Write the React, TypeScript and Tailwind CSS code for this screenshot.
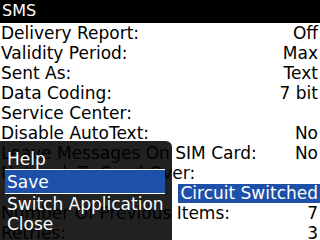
import React from "react";

type Row = { label: string; value?: string; focused?: boolean };

const rows: Row[] = [
  { label: "Delivery Report:", value: "Off" },
  { label: "Validity Period:", value: "Max" },
  { label: "Sent As:", value: "Text" },
  { label: "Data Coding:", value: "7 bit" },
  { label: "Service Center:" },
  { label: "Disable AutoText:", value: "No" },
  { label: "Leave Messages On SIM Card:", value: "No" },
  { label: "Network To Send Over:" },
  { label: "", value: "Circuit Switched", focused: true },
  { label: "Number Of Previous Items:", value: "7" },
  { label: "Retries:", value: "3" },
];

const menuItems = ["Help", "Save", "Switch Application", "Close"];

export default function App() {
  return (
    <div
      className="relative w-[320px] h-[240px] overflow-hidden bg-white text-black"
      style={{ fontFamily: '"DejaVu Sans", sans-serif' }}
    >
      {/* title bar */}
      <div className="h-[23px] bg-black pl-[2px] text-[16px] leading-[21px] text-white">SMS</div>

      {/* option rows */}
      <div className="flex flex-col">
        {rows.map((row, i) => (
          <div key={i} className="flex h-[20px] shrink-0 justify-between pl-px pr-[2px] text-[17px] leading-[20px] whitespace-nowrap">
            <span>{row.label}</span>
            {row.focused ? (
              <span className="-mr-[2px] mt-px h-[19px] bg-[#1d50a8] pl-[2px] pr-[2px] leading-[18px] text-white">
                {row.value}
              </span>
            ) : (
              <span>{row.value}</span>
            )}
          </div>
        ))}
      </div>

      {/* popup menu */}
      <div className="absolute left-0 top-[141px] bottom-0 w-[172px] rounded-tr-[6px] bg-black/[0.87] pt-[8px] text-[17px] text-white">
        {menuItems.map((item) =>
          item === "Save" ? (
            <div key={item} className="ml-[5px] mr-[7px] h-[25px] border-y border-white bg-[#1d50a8] pl-[2px] pt-[2px] leading-[20px]">
              {item}
            </div>
          ) : (
            <div key={item} className="h-[20px] pl-[7px] leading-[20px] whitespace-nowrap">
              {item}
            </div>
          )
        )}
      </div>
    </div>
  );
}
